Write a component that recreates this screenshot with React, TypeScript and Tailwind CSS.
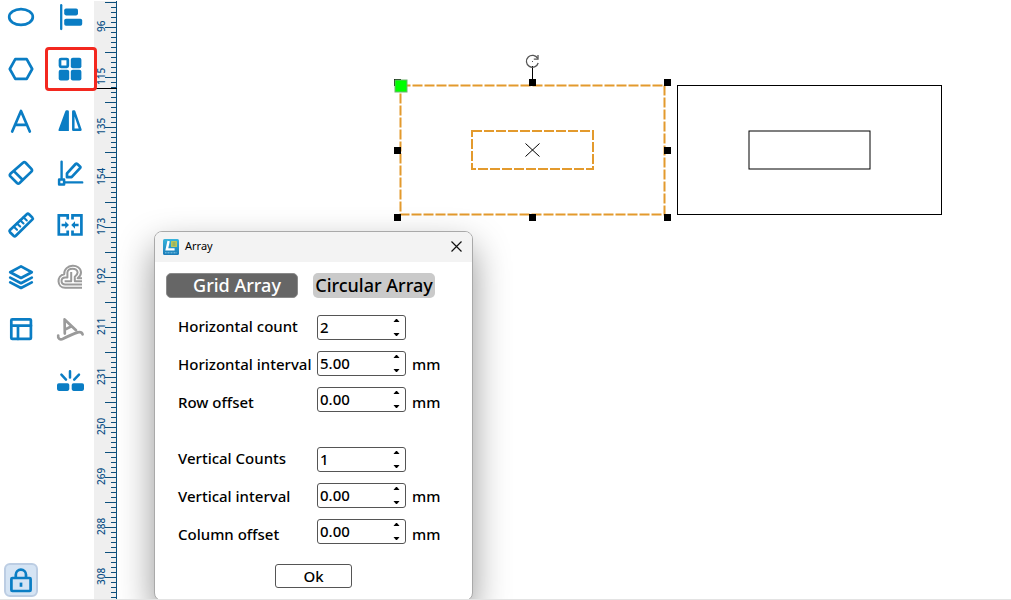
import { useState, type ReactNode } from "react";

const BLUE = "#0a7dc4";
const GREY = "#9a9a9a";

function Icon({ children, color = BLUE }: { children: ReactNode; color?: string }) {
  return (
    <svg
      className="h-8 w-8"
      viewBox="0 0 32 32"
      fill="none"
      stroke={color}
      strokeWidth="2.7"
      strokeLinecap="round"
      strokeLinejoin="round"
      aria-hidden="true"
    >
      {children}
    </svg>
  );
}

type Tool = { name: string; icon: ReactNode; active?: boolean };

const shapeTools: Tool[] = [
  { name: "Ellipse", icon: <Icon><ellipse cx="16" cy="16" rx="11.8" ry="7.8" /></Icon> },
  { name: "Polygon", icon: <Icon><path d="M10.3 6.2H21.7L27.2 16L21.7 25.8H10.3L4.8 16Z" /></Icon> },
  { name: "Text", icon: <Icon><path d="M7.2 26.5L16 6L24.8 26.5M10 19.8H22" /></Icon> },
  {
    name: "Eraser",
    icon: <Icon><path d="M18 5.8Q19.3 4.6 20.6 5.8L26.4 11.9Q27.6 13.3 26.4 14.6L14.6 26Q13.3 27.2 12 26L5.4 19.4Q4.3 18 5.4 16.8ZM9.4 14.6L17.8 23" /></Icon>,
  },
  {
    name: "Measure",
    icon: (
      <Icon>
        <path d="M21.8 5.2Q22.9 4.2 24 5.2L27.2 8.4Q28.2 9.5 27.2 10.6L10.8 26.8Q9.7 27.8 8.6 26.8L5 23.2Q4 22.1 5 21Z" />
        <path d="M8.6 17.6L12 20.8M11.9 14.4L15.2 17.6M15.2 11.2L18.5 14.4M18.5 8.2L21.8 11.4" strokeWidth="2.1" />
      </Icon>
    ),
  },
  {
    name: "Layers",
    icon: <Icon><path d="M16 5.4L26.8 11.2L16 17L5.2 11.2Z" /><path d="M5.2 16.6L16 22.2L26.8 16.6M5.2 21.4L16 27L26.8 21.4" /></Icon>,
  },
  {
    name: "Layout",
    icon: <Icon><rect x="6.3" y="6.3" width="19.6" height="19.6" rx="1" /><path d="M6.3 12.7H26M13 12.7V26" /></Icon>,
  },
];

const editTools: Tool[] = [
  {
    name: "Align",
    icon: (
      <Icon>
        <path d="M7.2 4.2V28" strokeWidth="2.3" />
        <g fill={BLUE} stroke="none">
          <rect x="10.2" y="7.5" width="13.8" height="6.9" rx="1.8" />
          <rect x="10.2" y="17.8" width="18" height="6.9" rx="1.8" />
        </g>
      </Icon>
    ),
  },
  {
    name: "Array",
    active: true,
    icon: (
      <Icon>
        <rect x="6" y="6" width="7.8" height="7.8" rx="1" />
        <g fill={BLUE} stroke="none">
          <rect x="16.8" y="4.7" width="10.6" height="10.5" rx="2" />
          <rect x="4.7" y="16.8" width="10.5" height="10.6" rx="2" />
          <rect x="16.8" y="16.8" width="10.6" height="10.6" rx="2" />
        </g>
      </Icon>
    ),
  },
  {
    name: "Mirror",
    icon: (
      <Icon>
        <path d="M12.6 5.2H13.4Q14.9 5.2 14.9 6.6V26H5.4Q4 26 4.6 24.4L11.2 6.6Q11.7 5.2 12.6 5.2Z" fill={BLUE} stroke="none" />
        <path d="M19.3 6.6V24.7H26.4L20.2 6.6Z" strokeWidth="2.5" />
      </Icon>
    ),
  },
  {
    name: "Edit nodes",
    icon: (
      <Icon>
        <path d="M7.6 4.6V21M11 25.4H28.2" strokeWidth="2.4" />
        <rect x="5.1" y="22.4" width="5" height="5" strokeWidth="2.5" />
        <path d="M13 16.4L21.6 7Q22.4 6.2 23.3 7L26 9.4Q26.9 10.2 26 11.2L17.6 20.2H13Z" />
      </Icon>
    ),
  },
  {
    name: "Weld",
    icon: (
      <Icon>
        <g strokeLinejoin="miter" strokeLinecap="butt">
          <path d="M13.7 10.6V6.3H4.8V25.5H13.7V21.4M18.5 10.6V6.3H27.4V25.5H18.5V21.4" />
          <path d="M7.6 16H12M24.6 16H20.2" />
        </g>
        <path d="M11.2 12.2L15 16L11.2 19.8ZM21 12.2L17.2 16L21 19.8Z" fill={BLUE} stroke="none" />
      </Icon>
    ),
  },
  {
    name: "Offset",
    icon: (
      <Icon color={GREY}>
        <g strokeWidth="2" strokeLinecap="butt">
          <path d="M28 26.7H11.2C2.6 26.7 2.4 14.6 10.2 13.2C9.8 2.6 26.6 2 27 11.4Q27 14.4 23.6 17.2H28" />
          <path d="M28 23.5H11.2C6.4 23.5 6.2 16.6 11.2 16.4H13.4V11.6C13.4 6.4 23.6 6.4 23.6 11.6Q23.6 13.6 20.8 15.8V20.3H28" />
          <path d="M17.2 11V20.2H10.6" />
        </g>
      </Icon>
    ),
  },
  {
    name: "Text on path",
    icon: (
      <Icon color={GREY}>
        <path d="M10.8 20.6L10.6 6.4L22 17.2M11 16.6L17.4 13.2" />
        <path d="M4.2 22.6C3.6 25.6 6.2 27.4 9 25.8C14.6 23 19.4 20.8 23.8 19.4C26.4 18.8 28 19.6 28.6 21.4" />
      </Icon>
    ),
  },
  {
    name: "Break apart",
    icon: (
      <Icon>
        <path d="M16 6.2V12.6M7.4 9.6L12 14.6M25 9.6L20.2 14.6" strokeWidth="2.5" />
        <g fill={BLUE} stroke="none">
          <rect x="3" y="18.3" width="12.3" height="7.6" rx="1.8" />
          <rect x="17.7" y="18.3" width="12.3" height="7.6" rx="1.8" />
        </g>
      </Icon>
    ),
  },
];

function ToolColumn({ tools }: { tools: Tool[] }) {
  return (
    <div className="flex flex-col gap-5">
      {tools.map((t) => (
        <button key={t.name} type="button" aria-label={t.name} className="relative block h-8 w-8">
          {t.icon}
          {t.active && (
            <span className="absolute -top-[6px] -left-[9px] z-10 h-[44px] w-[52px] rounded-[4px] border-[3px] border-[#f3281f]" />
          )}
        </button>
      ))}
    </div>
  );
}

const rulerLabels = ["96", "115", "135", "154", "173", "192", "211", "231", "250", "269", "288", "308"];

function VerticalRuler() {
  return (
    <div className="relative mt-px flex w-[23px] shrink-0 overflow-hidden bg-[#efefef] pl-[2px]">
      <div className="flex h-0 flex-col">
        {rulerLabels.map((l) => (
          <span
            key={l}
            className="flex h-[50px] w-[10px] shrink-0 rotate-180 items-center justify-center font-['Noto_Sans',sans-serif] text-[10px] leading-[10px] font-medium text-[#0c4f86] [writing-mode:vertical-rl]"
          >
            {l}
          </span>
        ))}
      </div>
      <svg className="absolute inset-y-0 right-0 h-full w-3" aria-hidden="true">
        <defs>
          <pattern id="ticks" width="12" height="25" patternUnits="userSpaceOnUse">
            <path
              d="M0 1.5H12M6 6.5H12M6 11.5H12M6 16.5H12M6 21.5H12"
              stroke="#0c4f7c"
              shapeRendering="crispEdges"
            />
          </pattern>
        </defs>
        <rect width="12" height="100%" fill="url(#ticks)" />
        <rect x="11" width="1" height="100%" fill="#0c4f7c" />
      </svg>
      <span className="absolute top-[87px] left-0 h-px w-full bg-black" />
    </div>
  );
}

const handles = [
  [394, 79], [529, 79], [664, 79],
  [394, 147], [664, 147],
  [394, 214], [529, 214], [664, 214],
];

function Drawing() {
  return (
    <svg className="absolute inset-0 h-full w-full" role="img" aria-label="Workspace">
      <g transform="translate(-117 0)" fill="none">
        <rect x="677.5" y="85.5" width="264" height="129" stroke="#000" />
        <rect x="749" y="131" width="121" height="38" stroke="#000" />
        <g stroke="#e39a2d" strokeWidth="2" strokeDasharray="10 2">
          <rect x="400.5" y="85.5" width="264" height="129" />
          <rect x="472" y="131" width="121" height="38" />
        </g>
        <path d="M525.5 143.5L539.5 156.5M539.5 143.5L525.5 156.5" stroke="#000" />
        <path d="M532.5 66V80" stroke="#000" />
        <path d="M537.7 58.4A6 6 0 1 0 538.2 63" stroke="#555" strokeWidth="1.3" />
        <path d="M538 55V59.2H533.8" stroke="#555" strokeWidth="1.3" />
        <rect x="532" y="61" width="1" height="1" fill="#555" />
        {handles.map(([x, y]) => (
          <rect key={`${x}-${y}`} x={x} y={y} width="7" height="7" fill="#000" />
        ))}
        <rect x="395" y="80" width="12" height="12" fill="#00ff00" stroke="#6fb36f" />
      </g>
    </svg>
  );
}

function SpinBox({ id, initial, decimals }: { id: string; initial: number; decimals: number }) {
  const [text, setText] = useState(initial.toFixed(decimals));
  const step = (d: number) => setText((t) => Math.max(0, (Number(t) || 0) + d).toFixed(decimals));
  return (
    <div className="flex h-[25px] w-[89px] rounded-[3px] border border-[#555] bg-white">
      <input
        id={id}
        value={text}
        onChange={(e) => setText(e.target.value)}
        inputMode="decimal"
        className="w-0 flex-1 bg-transparent pl-[2px] outline-none"
      />
      <div className="flex w-3 flex-col justify-between py-[3px]">
        <button type="button" aria-label="Increase" onClick={() => step(1)}>
          <svg className="h-[3px] w-[7px]" viewBox="0 0 7 3" aria-hidden="true"><path d="M0.5 3L3 0H4L6.5 3Z" /></svg>
        </button>
        <button type="button" aria-label="Decrease" onClick={() => step(-1)}>
          <svg className="h-[3px] w-[7px]" viewBox="0 0 7 3" aria-hidden="true"><path d="M0.5 0L3 3H4L6.5 0Z" /></svg>
        </button>
      </div>
    </div>
  );
}

type Field = { id: string; label: string; value: number; decimals: number; unit: string };

const horizontal: Field[] = [
  { id: "h-count", label: "Horizontal count", value: 2, decimals: 0, unit: "" },
  { id: "h-interval", label: "Horizontal interval", value: 5, decimals: 2, unit: "mm" },
  { id: "row-offset", label: "Row offset", value: 0, decimals: 2, unit: "mm" },
];

const vertical: Field[] = [
  { id: "v-count", label: "Vertical Counts", value: 1, decimals: 0, unit: "" },
  { id: "v-interval", label: "Vertical interval", value: 0, decimals: 2, unit: "mm" },
  { id: "col-offset", label: "Column offset", value: 0, decimals: 2, unit: "mm" },
];

function FieldGroup({ fields }: { fields: Field[] }) {
  return (
    <div className="flex">
      <div className="flex w-[139px] flex-col gap-[18px] pt-px">
        {fields.map((f) => (
          <label key={f.id} htmlFor={f.id} className="h-5 leading-5 whitespace-nowrap">{f.label}</label>
        ))}
      </div>
      <div className="flex flex-col gap-[11px]">
        {fields.map((f) => (
          <SpinBox key={f.id} id={f.id} initial={f.value} decimals={f.decimals} />
        ))}
      </div>
      <div className="flex flex-col gap-[18px] pt-px pl-[6px]">
        {fields.map((f) => (
          <span key={f.id} className="h-5 leading-5">{f.unit}</span>
        ))}
      </div>
    </div>
  );
}

function ArrayDialog() {
  return (
    <section
      role="dialog"
      aria-label="Array"
      className="absolute top-[231px] left-[37px] w-[319px] overflow-hidden rounded-lg border border-[#a9a9a9] bg-white font-['Noto_Sans',sans-serif] text-[15px] font-medium text-black shadow-[0_16px_36px_rgba(0,0,0,0.42)]"
    >
      <header className="flex h-[30px] items-center bg-[#f3f3f3] pr-[10px] pb-px pl-2">
        <svg className="h-4 w-4" viewBox="0 0 16 16" aria-hidden="true">
          <defs>
            <linearGradient id="logo" x1="0" y1="0" x2="0" y2="1">
              <stop offset="0" stopColor="#38b4dc" />
              <stop offset="1" stopColor="#1a7bb8" />
            </linearGradient>
          </defs>
          <rect width="16" height="16" rx="1.5" fill="url(#logo)" />
          <rect x="8" y="2" width="6" height="6" rx="0.5" fill="#b9c65a" />
          <path d="M9.5 4H12.5M9.5 6H12.5" stroke="#6d9a6a" strokeWidth="0.8" />
          <path d="M5.6 2L3.8 10.4H11.6" fill="none" stroke="#fff" strokeWidth="2.4" />
          <path d="M2 13.8H14" stroke="#8fd0ea" strokeWidth="0.9" strokeDasharray="1 0.5" />
        </svg>
        <h1 className="ml-[6px] flex-1 text-[11px] font-normal">Array</h1>
        <button type="button" aria-label="Close">
          <svg className="h-[11px] w-[11px]" viewBox="0 0 11 11" fill="none" stroke="#111" strokeWidth="1.2" aria-hidden="true">
            <path d="M0.5 0.5L10.5 10.5M10.5 0.5L0.5 10.5" />
          </svg>
        </button>
      </header>
      <div className="flex gap-[15px] pt-[11px] pl-[11px] text-[18px]">
        <button type="button" className="h-[25px] w-[132px] rounded-[5px] border border-[#8a8a8a] bg-[#666] pb-px pl-[10px] leading-[22px] text-white">
          Grid Array
        </button>
        <button type="button" className="h-[25px] w-[122px] rounded-[5px] bg-[#cacaca] pb-px leading-6 whitespace-nowrap">Circular Array</button>
      </div>
      <form className="pt-[17px]" onSubmit={(e) => e.preventDefault()}>
        <div className="flex flex-col gap-[35px] pl-[23px]">
          <FieldGroup fields={horizontal} />
          <FieldGroup fields={vertical} />
        </div>
        <div className="flex justify-center pt-5 pb-3">
          <button type="submit" className="h-6 w-[77px] rounded-[3px] border border-[#555] leading-[22px]">Ok</button>
        </div>
      </form>
    </section>
  );
}

export default function App() {
  return (
    <div className="flex h-screen flex-col overflow-hidden bg-white">
      <div className="relative flex min-h-0 flex-1">
        <aside className="z-10 flex w-[94px] shrink-0 flex-col justify-between pt-px pb-[2px] pl-[5px]">
          <div className="flex gap-[17px]">
            <ToolColumn tools={shapeTools} />
            <ToolColumn tools={editTools} />
          </div>
          <button
            type="button"
            aria-label="Lock"
            className="-ml-px flex h-[34px] w-[34px] items-center justify-center rounded-md border-2 border-[#bccde3] bg-[#d5e4f4]"
          >
            <svg className="h-[26px] w-[22px]" viewBox="0 0 22 26" fill="none" stroke={BLUE} strokeWidth="2.7" aria-hidden="true">
              <rect x="1.4" y="11" width="19.2" height="13" rx="1" />
              <path d="M5.8 11V7.8A5.1 5.1 0 0 1 16 7.8V11" />
              <path d="M11 15.6V19.8" />
            </svg>
          </button>
        </aside>
        <VerticalRuler />
        <main className="relative min-w-0 flex-1 overflow-hidden">
          <Drawing />
          <ArrayDialog />
        </main>
      </div>
      <div className="h-px shrink-0 bg-[#e3e3e3]" />
    </div>
  );
}
